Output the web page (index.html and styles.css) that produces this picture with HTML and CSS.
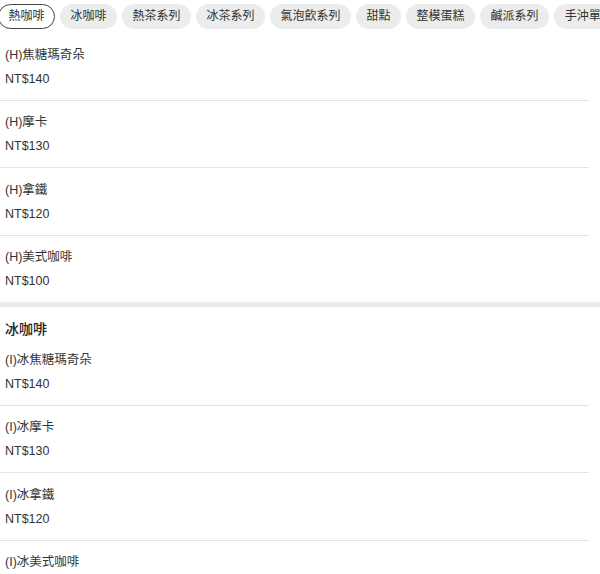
FILE: index.html
```html
<!DOCTYPE html>
<html lang="zh-Hant">
<head>
<meta charset="utf-8">
<title>Menu</title>
<link rel="stylesheet" href="styles.css">
</head>
<body>
<nav class="tabs">
  <span class="tab active">熱咖啡</span>
  <span class="tab">冰咖啡</span>
  <span class="tab">熱茶系列</span>
  <span class="tab">冰茶系列</span>
  <span class="tab">氣泡飲系列</span>
  <span class="tab">甜點</span>
  <span class="tab">整模蛋糕</span>
  <span class="tab">鹹派系列</span>
  <span class="tab">手沖單品</span>
</nav>
<main class="menu">
  <section class="category">
    <ul class="items">
      <li class="item"><div class="name">(H)焦糖瑪奇朵</div><div class="price">NT$140</div></li>
      <li class="item"><div class="name">(H)摩卡</div><div class="price">NT$130</div></li>
      <li class="item"><div class="name">(H)拿鐵</div><div class="price">NT$120</div></li>
      <li class="item"><div class="name">(H)美式咖啡</div><div class="price">NT$100</div></li>
    </ul>
  </section>
  <section class="category">
    <h2 class="cat-title">冰咖啡</h2>
    <ul class="items">
      <li class="item"><div class="name">(I)冰焦糖瑪奇朵</div><div class="price">NT$140</div></li>
      <li class="item"><div class="name">(I)冰摩卡</div><div class="price">NT$130</div></li>
      <li class="item"><div class="name">(I)冰拿鐵</div><div class="price">NT$120</div></li>
      <li class="item"><div class="name">(I)冰美式咖啡</div><div class="price">NT$100</div></li>
    </ul>
  </section>
</main>
</body>
</html>
```
FILE: styles.css
```css
html, body {
  margin: 0;
  padding: 0;
  background: #fff;
}
body {
  width: 600px;
  height: 574px;
  overflow: hidden;
  font-family: "Liberation Sans", "Noto Sans CJK TC", sans-serif;
  color: #333;
}
.tabs {
  display: flex;
  gap: 5px;
  padding: 4px 0 4px 0;
  margin-left: -2px;
  white-space: nowrap;
  overflow: hidden;
}
.tab {
  flex: none;
  height: 23px;
  line-height: 23px;
  padding: 0 9.5px;
  border: 1px solid transparent;
  border-radius: 13px;
  background: #ececec;
  font-size: 12px;
  color: #333;
}
.tab.active {
  background: #fff;
  border-color: #444;
}
.menu {
  display: flex;
  flex-direction: column;
}
.category + .category {
  border-top: 5px solid #ebebeb;
}
.cat-title {
  margin: 0;
  padding: 13px 0 0 5px;
  font-size: 14px;
  line-height: 18px;
  font-weight: 500;
  color: #222;
}
.items {
  list-style: none;
  margin: 0;
  padding: 0;
  width: 589px;
}
.item {
  padding: 11.5px 0 11px 5px;
  border-bottom: 1px solid #e3e3e3;
  font-size: 12.5px;
}
.item:last-child {
  border-bottom: none;
}
.name {
  line-height: 20px;
  margin-bottom: 4px;
}
.price {
  line-height: 20px;
}
```
